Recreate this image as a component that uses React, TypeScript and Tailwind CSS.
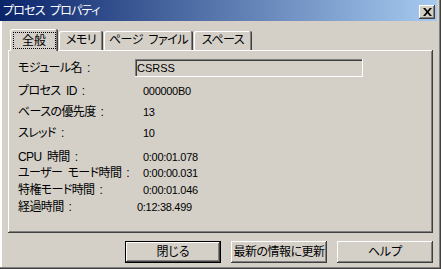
import React from 'react';

const raised =
  'shadow-[inset_-1px_-1px_#404040,inset_1px_1px_#ffffff,inset_-2px_-2px_#808080]';

const rows = [
  { label: 'プロセス\u2002ID', value: '000000B0', mt: 'mt-[5px]', h: 'h-[18px]', lw: 'w-[125px]' },
  { label: 'ベースの優先度', value: '13', mt: 'mt-[3px]', h: 'h-[18px]', lw: 'w-[125px]' },
  { label: 'スレッド', value: '10', mt: 'mt-[3px]', h: 'h-[18px]', lw: 'w-[125px]' },
  { label: 'CPU\u2002時間', value: '0:00:01.078', mt: 'mt-[7px]', h: 'h-[16px]', lw: 'w-[125px]' },
  { label: 'ユーザー\u2002モード時間', value: '0:00:00.031', mt: 'mt-0', h: 'h-[16px]', lw: 'w-[125px]' },
  { label: '特権モード時間', value: '0:00:01.046', mt: 'mt-[1px]', h: 'h-[16px]', lw: 'w-[125px]' },
  { label: '経過時間', value: '0:12:38.499', mt: 'mt-[1px]', h: 'h-[16px]', lw: 'w-[119px]' },
];

const tabs = [
  { name: 'メモリ', w: 'w-[44px]', ml: 'ml-[1px]' },
  { name: 'ページ\u2002ファイル', w: 'w-[89px]', ml: 'ml-[1px]' },
  { name: 'スペース', w: 'w-[58px]', ml: 'ml-[1px]' },
];

function Label({ text, width }: { text: string; width: string }) {
  return (
    <span className={`${width} text-[12px] leading-none whitespace-pre`}>
      <span className="tracking-[-0.6px]">{text}</span>
      <span className="ml-[5px]">:</span>
    </span>
  );
}

export default function App() {
  return (
    <div className="w-[441px] h-[269px] bg-[#d4d0c8] flex flex-col text-black font-['Liberation_Sans','Noto_Sans_CJK_JP',sans-serif] [font-feature-settings:'palt'] shadow-[inset_-1px_-1px_#404040,inset_-2px_-2px_#808080,inset_2px_0_#ffffff] overflow-hidden">
      {/* title bar */}
      <div className="w-[437px] h-[21px] flex items-center justify-between bg-[linear-gradient(to_right,#0a246a,#a6caf0)]">
        <span className="pl-[3px] pt-[1px] text-white text-[12px] leading-none tracking-[-0.8px] whitespace-pre">{'プロセス\u2002プロパティ'}</span>
        <div className={`mr-[2px] mt-[3px] w-[16px] h-[14px] bg-[#d4d0c8] flex items-center justify-center ${raised}`}>
          <svg width="9" height="8" viewBox="0 0 9 8">
            <path d="M0 0h2.2l2.3 2.8L6.8 0H9L5.6 4 9 8H6.8L4.5 5.2 2.2 8H0l3.4-4z" fill="#000" />
          </svg>
        </div>
      </div>

      {/* tabs */}
      <div className="mt-[8px] ml-[10px] h-[21px] flex items-end text-[12px] leading-none tracking-[-0.5px] whitespace-pre">
        <div className="relative z-10 -mb-[1px] w-[48px] h-[22px] bg-[#d4d0c8] rounded-t-[2px] shadow-[inset_-1px_0_#404040,inset_1px_1px_#ffffff,inset_-2px_0_#808080] flex items-start justify-center pt-[3px]">
          <div className="w-[43px] h-[17px] border border-dotted border-black flex items-center justify-center tracking-normal">全般</div>
        </div>
        {tabs.map((t) => (
          <div
            key={t.name}
            className={`${t.w} ${t.ml} h-[19px] rounded-t-[2px] shadow-[inset_-1px_0_#404040,inset_1px_1px_#ffffff,inset_-2px_0_#808080] flex items-center justify-center pb-[1px]`}
          >
            {t.name}
          </div>
        ))}
      </div>

      {/* tab panel */}
      <div className={`ml-[8px] w-[425px] h-[183px] flex flex-col pt-[9px] pl-[10px] ${raised}`}>
        <div className="h-[18px] flex items-center">
          <Label text="モジュール名" width="w-[117px]" />
          <div className="w-[228px] h-[18px] flex items-center pl-[2px] text-[11px] leading-none shadow-[inset_-1px_-1px_#ffffff,inset_1px_1px_#808080,inset_2px_2px_#404040]">
            CSRSS
          </div>
        </div>
        {rows.map((r) => (
          <div key={r.label} className={`${r.h} ${r.mt} flex items-center`}>
            <Label text={r.label} width={r.lw} />
            <span className="text-[11px] leading-none tracking-[-0.3px]">{r.value}</span>
          </div>
        ))}
      </div>

      {/* buttons */}
      <div className="mt-[8px] pr-[8px] flex justify-end gap-[10px] text-[12px] leading-none">
        <button className={`w-[96px] h-[22px] border border-black bg-[#d4d0c8] flex items-center justify-center ${raised}`}>
          閉じる
        </button>
        <button className={`w-[96px] h-[22px] bg-[#d4d0c8] flex items-center justify-center tracking-[-0.5px] ${raised}`}>
          最新の情報に更新
        </button>
        <button className={`w-[96px] h-[22px] bg-[#d4d0c8] flex items-center justify-center ${raised}`}>
          ヘルプ
        </button>
      </div>
    </div>
  );
}
